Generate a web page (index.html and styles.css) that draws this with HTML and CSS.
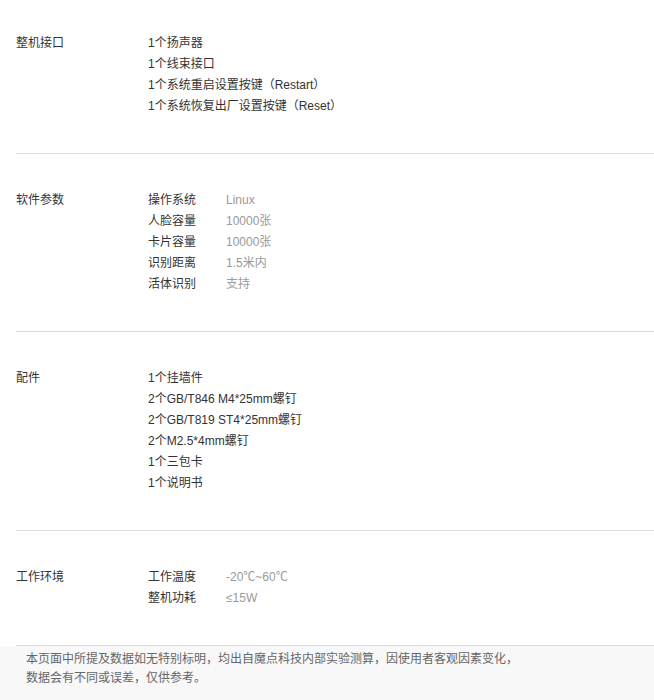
FILE: index.html
```html
<!DOCTYPE html>
<html lang="zh-CN">
<head>
  <meta charset="UTF-8" />
  <meta name="viewport" content="width=device-width, initial-scale=1" />
  <title>规格参数</title>
  <link rel="stylesheet" href="styles.css">
</head>
<body>
  <!-- 参数分组 -->
  <div class="spec">
    <div class="spec-row">
      <div class="spec-name">整机接口</div>
      <ul class="spec-list">
        <li>1个扬声器</li>
        <li>1个线束接口</li>
        <li>1个系统重启设置按键（Restart）</li>
        <li>1个系统恢复出厂设置按键（Reset）</li>
      </ul>
    </div>

    <div class="spec-row">
      <div class="spec-name">软件参数</div>
      <table class="spec-table">
        <tr><th>操作系统</th><td>Linux</td></tr>
        <tr><th>人脸容量</th><td>10000张</td></tr>
        <tr><th>卡片容量</th><td>10000张</td></tr>
        <tr><th>识别距离</th><td>1.5米内</td></tr>
        <tr><th>活体识别</th><td>支持</td></tr>
      </table>
    </div>

    <div class="spec-row">
      <div class="spec-name">配件</div>
      <ul class="spec-list">
        <li>1个挂墙件</li>
        <li>2个GB/T846 M4*25mm螺钉</li>
        <li>2个GB/T819 ST4*25mm螺钉</li>
        <li>2个M2.5*4mm螺钉</li>
        <li>1个三包卡</li>
        <li>1个说明书</li>
      </ul>
    </div>

    <div class="spec-row">
      <div class="spec-name">工作环境</div>
      <table class="spec-table">
        <tr><th>工作温度</th><td>-20℃~60℃</td></tr>
        <tr><th>整机功耗</th><td>≤15W</td></tr>
      </table>
    </div>
  </div>

  <p class="note">
    本页面中所提及数据如无特别标明，均出自魔点科技内部实验测算，因使用者客观因素变化，<br />
    数据会有不同或误差，仅供参考。
  </p>
</body>
</html>
```

FILE: styles.css
```css
body {
  margin: 0;
  font-family: 'Liberation Sans', 'Noto Sans CJK SC', sans-serif;
  font-size: 12px;
  color: #333;
  background-color: #fff;
}
.spec {
  margin-left: 16px;
}
.spec-row {
  display: flex;
  padding: 36px 0 36px 0;
  border-bottom: 1px solid #ddd;
  line-height: 21px;
}
.spec-row:first-child {
  padding-top: 33px;
}
.spec-name {
  width: 132px;
  flex-shrink: 0;
}
.spec-list {
  margin: 0;
  padding: 0;
  list-style: none;
}
.spec-table {
  border-collapse: collapse;
}
.spec-table th,
.spec-table td {
  padding: 0;
  text-align: left;
  font-weight: normal;
  vertical-align: top;
}
.spec-table th {
  width: 78px;
  color: #333;
}
.spec-table td {
  color: #999;
}
/* 底部说明 */
p.note {
  margin: 0;
  padding: 4px 26px 12px 26px;
  background-color: #f8f8f8;
  color: #666;
  line-height: 19px;
}
```
